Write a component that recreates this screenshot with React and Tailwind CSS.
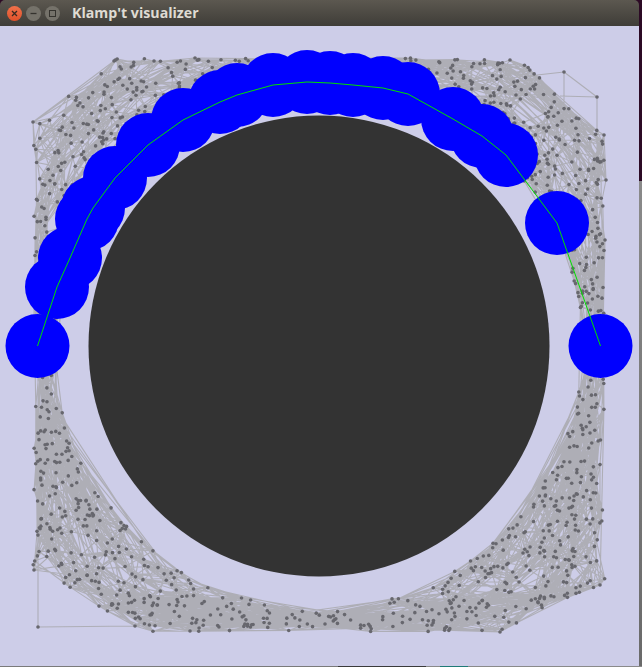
import React, { useMemo } from "react";

const CX = 319;
const CY = 346;

const path = [
  [37.5, 346], [57, 287], [70, 258], [87, 219], [93, 208], [115, 178], [148, 145], [183, 120], [220, 102],
  [237, 95], [273, 85], [307, 82], [330, 83], [353, 85], [383, 88], [408, 94], [453, 119],
  [482, 136], [506, 155], [557, 223], [600.5, 346],
];

const fixedNodes = [
  [114, 61], [154, 61], [195, 58], [564, 72], [597, 97], [604, 135], [606, 180], [605, 240],
  [38, 627], [135, 626], [600, 585], [33, 122], [510, 60], [34, 570], [190, 631], [500, 632],
];

// corners only carry the hull lines drawn by hand below
const hullOnly = new Set(["38,627", "564,72", "597,97", "114,61"]);

function rng(seed) {
  let s = seed;
  return () => {
    s = (s + 0x6d2b79f5) | 0;
    let t = Math.imul(s ^ (s >>> 15), 1 | s);
    t = (t + Math.imul(t ^ (t >>> 7), 61 | t)) ^ t;
    return ((t ^ (t >>> 14)) >>> 0) / 4294967296;
  };
}

function inRegion(x, y) {
  const d = Math.hypot(x - CX, y - CY);
  if (d < 263) return false;
  // cut the corners of the sampling box
  if (y < 120 && x < 113 && (x - 33) * 59 + (y - 122) * 80 < 0) return false;
  if (y < 135 && x > 520 && (x - 520) * 75 - (y - 60) * 84 > 0) return false;
  if (y > 560 && x < 140 && (y - 565) * 100 - (x - 33) * 65 > 0) return false;
  if (y > 585 && x > 500 && (y - 585) * 100 + (x - 600) * 47 > 0) return false;
  return true;
}

function segmentClear(a, b) {
  const dx = b[0] - a[0];
  const dy = b[1] - a[1];
  const t = Math.max(0, Math.min(1, ((CX - a[0]) * dx + (CY - a[1]) * dy) / (dx * dx + dy * dy || 1)));
  return Math.hypot(a[0] + t * dx - CX, a[1] + t * dy - CY) > 254;
}

function buildRoadmap() {
  const rand = rng(7331);
  const nodes = [...fixedNodes];
  while (nodes.length < 1300) {
    const x = 33 + rand() * 572;
    const y = 58 + rand() * 574;
    if (inRegion(x, y)) nodes.push([x, y]);
  }
  const polar = nodes.map(([x, y]) => [Math.hypot(x - CX, y - CY), Math.atan2(y - CY, x - CX)]);
  let d = "";
  const addEdge = (a, b) => {
    if (hullOnly.has(a.join(",")) || hullOnly.has(b.join(","))) return;
    if (segmentClear(a, b)) d += `M${a[0].toFixed(1)} ${a[1].toFixed(1)}L${b[0].toFixed(1)} ${b[1].toFixed(1)}`;
  };
  nodes.forEach((a, i) => {
    const c = Math.cos(polar[i][1]) ** 2;
    const s = 1 - c;
    const tangent = [];
    const axis = [];
    nodes.forEach((b, j) => {
      if (i === j) return;
      let dt = Math.abs(polar[i][1] - polar[j][1]);
      if (dt > Math.PI) dt = 2 * Math.PI - dt;
      const dist = (dt * 300) ** 2 + (6 * (polar[i][0] - polar[j][0])) ** 2;
      if (dist < 60000) tangent.push([dist, j]);
      // sides run mostly vertical, top and bottom mostly horizontal
      const distAxis = ((a[0] - b[0]) * (1 + 10 * c)) ** 2 + ((a[1] - b[1]) * (1 + 10 * s)) ** 2;
      if (distAxis < 200000) axis.push([distAxis, j]);
    });
    tangent.sort((p, q) => p[0] - q[0]);
    axis.sort((p, q) => p[0] - q[0]);
    tangent.slice(0, 2).forEach(([, j]) => addEdge(a, nodes[j]));
    for (let k = 0; k < 2 && tangent.length > 0; k++) addEdge(a, nodes[tangent[Math.floor(rand() * Math.min(30, tangent.length))][1]]);
    for (let k = 0; k < 3 && axis.length > 0; k++) addEdge(a, nodes[axis[Math.floor(rand() * Math.min(30, axis.length))][1]]);
  });

  // long runs along the narrow passages, lower left and right fan up toward the start and goal
  const lowerLeftTop = nodes.filter(([x, y]) => y > 380 && y < 440 && x < 70);
  const lowerRightTop = nodes.filter(([x, y]) => y > 380 && y < 440 && x > 568);
  nodes.forEach((a) => {
    if (a[1] > 440 && a[1] < 600 && rand() < 0.4) {
      if (a[0] < 200 && lowerLeftTop.length) addEdge(a, lowerLeftTop[Math.floor(rand() * lowerLeftTop.length)]);
      if (a[0] > 440 && lowerRightTop.length) addEdge(a, lowerRightTop[Math.floor(rand() * lowerRightTop.length)]);
    }
  });
  // bottom runs along the passage under the obstacle
  const bottom = nodes.filter(([, y]) => y > 585);
  bottom.forEach((a) => {
    const far = bottom.filter((b) => Math.abs(b[0] - a[0]) > 60 && Math.abs(b[0] - a[0]) < 170);
    if (far.length) addEdge(a, far[Math.floor(rand() * far.length)]);
  });

  // outer hull lines seen in the picture
  d += "M38 627L38 380M38 627L135 626M114 61L154 61M114 61L33 122M114 61L90 120M564 72L510 78M564 72L597 97M597 97L597 240M564 72L564 130M597 97L560 96";
  return { nodes, d };
}

function Roadmap() {
  const { nodes, d } = useMemo(buildRoadmap, []);
  return (
    <svg width="639" height="640" viewBox="0 26 639 640" className="block">
      <path d={d} fill="none" stroke="#aeaeb6" strokeWidth="1.1" />
      {nodes.map(([x, y], i) => (
        <circle key={i} cx={x} cy={y} r="1.8" fill="#67676e" />
      ))}
      <circle cx={CX} cy={CY} r="230.5" fill="#333333" />
      {path.map(([x, y], i) => (
        <circle key={i} cx={x} cy={y} r="32" fill="#0000ff" />
      ))}
      <polyline points={path.map((p) => p.join(",")).join(" ")} fill="none" stroke="#00e000" strokeWidth="1" />
    </svg>
  );
}

function WindowButton({ className, children }) {
  return (
    <div className={`w-[15px] h-[15px] rounded-full flex items-center justify-center ${className}`}>
      {children}
    </div>
  );
}

export default function App() {
  return (
    <div className="w-[642px] h-[667px] bg-[#2c0a25] overflow-hidden flex flex-col">
      <div className="flex h-[666px]">
        <div className="w-[639px] flex flex-col">
          <div className="h-[26px] rounded-t-[5px] bg-gradient-to-b from-[#5c5850] to-[#3f3d38] flex items-center pl-[7px]">
            <div className="flex gap-1">
              <WindowButton className="bg-gradient-to-b from-[#f0714a] to-[#e0512a]">
                <svg width="7" height="7" viewBox="0 0 7 7"><path d="M1 1L6 6M6 1L1 6" stroke="#3a2a20" strokeWidth="1.3" /></svg>
              </WindowButton>
              <WindowButton className="bg-[#75726a]">
                <svg width="7" height="7" viewBox="0 0 7 7"><path d="M0.5 3.5H6.5" stroke="#35332e" strokeWidth="1.3" /></svg>
              </WindowButton>
              <WindowButton className="bg-[#75726a]">
                <svg width="7" height="7" viewBox="0 0 7 7"><rect x="0.5" y="0.5" width="6" height="6" fill="none" stroke="#35332e" strokeWidth="1" /></svg>
              </WindowButton>
            </div>
            <span className="ml-[12px] text-[14.2px] font-bold text-[#dfdbd2] whitespace-nowrap [font-family:'Open_Sans',sans-serif]">
              Klamp't visualizer
            </span>
          </div>
          <div className="h-[640px] bg-[#cdcde8]">
            <Roadmap />
          </div>
        </div>
        <div className="w-[3px] flex flex-col">
          <div className="h-[181px] bg-[#2c0a25]" />
          <div className="flex-1 bg-gradient-to-b from-[#8a8a8a] to-[#6a6a6a]" />
        </div>
      </div>
      <div className="h-px flex bg-[#8a8a8a]">
        <div className="w-[338px] bg-[#7a7a7a]" />
        <div className="w-[88px] bg-[#3a3a3a]" />
        <div className="w-[14px]" />
        <div className="w-[28px] bg-[#1f7a76]" />
      </div>
    </div>
  );
}
